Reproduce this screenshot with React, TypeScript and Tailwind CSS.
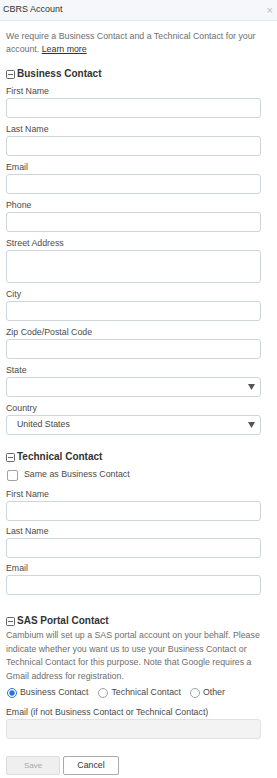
import React from "react";

const font = { fontFamily: '"Liberation Sans", Arial, sans-serif' };

function MinusBox() {
  return (
    <svg width="9" height="9" viewBox="0 0 9 9" className="shrink-0">
      <rect x="0.5" y="0.5" width="8" height="8" rx="1" fill="none" stroke="#666" strokeWidth="1" />
      <line x1="2" y1="4.5" x2="7" y2="4.5" stroke="#666" strokeWidth="1" />
    </svg>
  );
}

function Heading({ children }: { children: React.ReactNode }) {
  return (
    <div className="flex items-center gap-[2px] h-[14px] text-[10px] font-bold text-[#333] leading-[14px]">
      <MinusBox />
      <span>{children}</span>
    </div>
  );
}

function Field({ label, tall, mb = "mb-[5px]" }: { label: string; tall?: boolean; mb?: string }) {
  return (
    <div className={mb}>
      <div className="h-[13px] leading-[13px] text-[8.8px] text-[#4a4a4a]">{label}</div>
      <div
        className={`w-[255px] ${tall ? "h-[33px]" : "h-[20px]"} border border-[#cdd6da] rounded-[3px] bg-white`}
      />
    </div>
  );
}

function Arrow() {
  return (
    <svg width="7" height="6" viewBox="0 0 7 6">
      <polygon points="0,0 7,0 3.5,6" fill="#555" />
    </svg>
  );
}

function SelectField({ label, value }: { label: string; value?: string }) {
  return (
    <div className="mb-[5px]">
      <div className="h-[13px] leading-[13px] text-[8.8px] text-[#4a4a4a]">{label}</div>
      <div className="w-[255px] h-[20px] border border-[#cdd6da] rounded-[3px] bg-white flex items-center justify-between pl-[10px] pr-[5px]">
        <span className="text-[8.8px] text-[#444]">{value ?? ""}</span>
        <Arrow />
      </div>
    </div>
  );
}

function Radio({ checked }: { checked?: boolean }) {
  return checked ? (
    <svg width="10" height="10" viewBox="0 0 10 10" className="shrink-0 block">
      <circle cx="5" cy="5" r="4.5" fill="white" stroke="#2a74d8" strokeWidth="1" />
      <circle cx="5" cy="5" r="2.7" fill="#2a74d8" />
    </svg>
  ) : (
    <svg width="10" height="10" viewBox="0 0 10 10" className="shrink-0 block">
      <circle cx="5" cy="5" r="4.5" fill="white" stroke="#9aa3a8" strokeWidth="1" />
    </svg>
  );
}

export default function App() {
  return (
    <div className="w-[277px] h-[778px] bg-white overflow-hidden" style={font}>
      <div className="h-[21px] bg-[#f5f7fb] border-b border-[#e6e9ef] flex items-center justify-between pl-[3px] pr-[4px]">
        <span className="text-[9px] text-[#333]">CBRS Account</span>
        <span className="text-[11px] text-[#bbb] leading-none">×</span>
      </div>

      <div className="pl-[6px] pr-[16px]">
        <div className="pt-[9px] text-[8.8px] leading-[13px] text-[#6e6e6e]">
          <div className="whitespace-nowrap">We require a Business Contact and a Technical Contact for your</div>
          <div className="whitespace-nowrap">
            account. <span className="underline text-[#333]">Learn more</span>
          </div>
        </div>

        <div className="mt-[11px] mb-[4px]">
          <Heading>Business Contact</Heading>
        </div>

        <Field label="First Name" />
        <Field label="Last Name" />
        <Field label="Email" />
        <Field label="Phone" />
        <Field label="Street Address" tall />
        <Field label="City" />
        <Field label="Zip Code/Postal Code" />
        <SelectField label="State" />
        <SelectField label="Country" value="United States" />

        <div className="mt-[15px]">
          <Heading>Technical Contact</Heading>
        </div>
        <div className="mt-[4px] h-[14px] flex items-center gap-[4px] pl-[1px]">
          <div className="w-[11px] h-[11px] border border-[#9aa3a8] rounded-[2px] bg-white" />
          <span className="text-[8.8px] text-[#4a4a4a] pl-[2px]">Same as Business Contact</span>
        </div>
        <div className="mt-[6px]">
          <Field label="First Name" mb="mb-[4px]" />
          <Field label="Last Name" mb="mb-[4px]" />
          <Field label="Email" mb="mb-[4px]" />
        </div>

        <div className="mt-[19px]">
          <Heading>SAS Portal Contact</Heading>
        </div>
        <div className="mt-[1px] text-[8.8px] leading-[13.5px] text-[#6e6e6e]">
          <div className="whitespace-nowrap">Cambium will set up a SAS portal account on your behalf. Please</div>
          <div className="whitespace-nowrap">indicate whether you want us to use your Business Contact or</div>
          <div className="whitespace-nowrap">Technical Contact for this purpose. Note that Google requires a</div>
          <div className="whitespace-nowrap">Gmail address for registration.</div>
        </div>
        <div className="mt-[3px] h-[14px] flex items-center text-[8.8px] text-[#4a4a4a] pl-[1px]">
          <Radio checked />
          <span className="ml-[3px]">Business Contact</span>
          <span className="ml-[10px]"><Radio /></span>
          <span className="ml-[3px]">Technical Contact</span>
          <span className="ml-[9px]"><Radio /></span>
          <span className="ml-[3px]">Other</span>
        </div>
        <div className="mt-[6px]">
          <div className="h-[13px] leading-[13px] text-[8.8px] text-[#4a4a4a]">Email (if not Business Contact or Technical Contact)</div>
          <div className="w-[255px] h-[20px] border border-[#dfe3e5] rounded-[3px] bg-[#f3f3f3]" />
        </div>

        <div className="mt-[17px] flex gap-[3px]">
          <button className="w-[54px] h-[19px] bg-[#efefef] border border-[#dcdcdc] rounded-[2px] text-[8px] text-[#aaa]">
            Save
          </button>
          <button className="w-[56px] h-[19px] bg-white border border-[#aaa] rounded-[2px] text-[8.8px] text-[#333]">
            Cancel
          </button>
        </div>
      </div>
    </div>
  );
}
